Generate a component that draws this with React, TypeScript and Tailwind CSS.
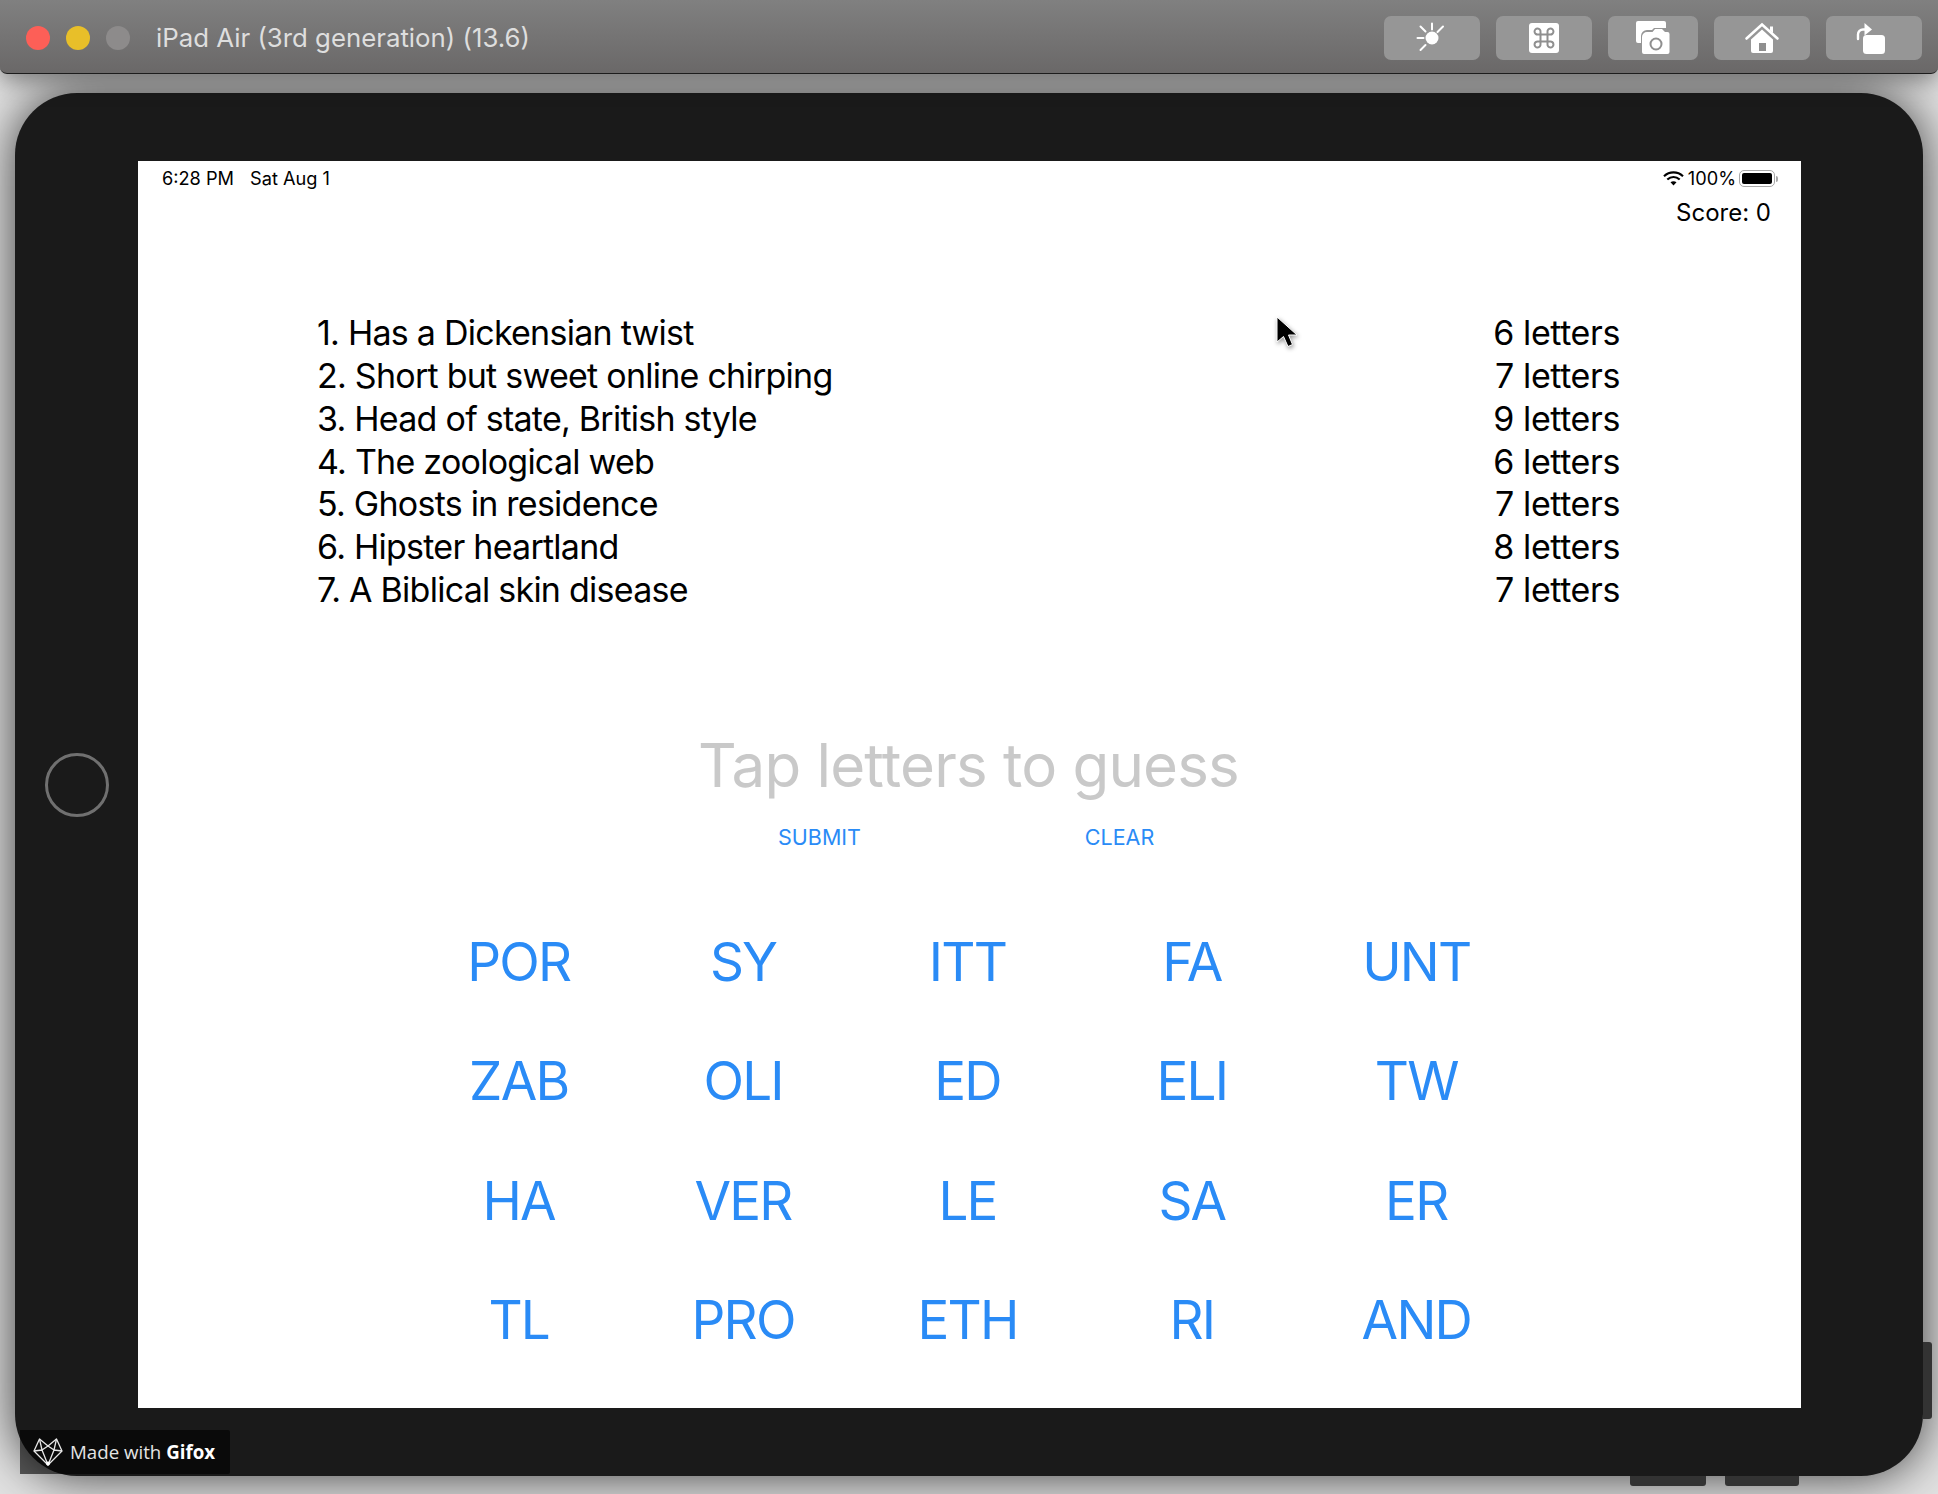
import React from 'react';

const clues = [
  { text: '1. Has a Dickensian twist', letters: '6 letters' },
  { text: '2. Short but sweet online chirping', letters: '7 letters' },
  { text: '3. Head of state, British style', letters: '9 letters' },
  { text: '4. The zoological web', letters: '6 letters' },
  { text: '5. Ghosts in residence', letters: '7 letters' },
  { text: '6. Hipster heartland', letters: '8 letters' },
  { text: '7. A Biblical skin disease', letters: '7 letters' },
];

const tiles = [
  'POR', 'SY', 'ITT', 'FA', 'UNT',
  'ZAB', 'OLI', 'ED', 'ELI', 'TW',
  'HA', 'VER', 'LE', 'SA', 'ER',
  'TL', 'PRO', 'ETH', 'RI', 'AND',
];

function SunIcon() {
  return (
    <svg width="32" height="32" viewBox="0 0 32 32" fill="none" stroke="white" strokeWidth="2" strokeLinecap="round">
      <circle cx="16" cy="16" r="6.5" fill="white" stroke="none" />
      <path d="M16 1.5V7.5M4.5 4.5L9.5 9.500M1.500 16H7.500M4.500 28L9.500 23M27 4.500L21.500 10" />
    </svg>
  );
}

function CommandIcon() {
  return (
    <div className="flex h-[30px] w-[30px] items-center justify-center rounded-[3px] bg-white">
      <svg width="24" height="24" viewBox="0 0 24 24" fill="none" stroke="#8f8f8f" strokeWidth="2">
        <path d="M8.5 8.5h7v7h-7zM8.5 8.5H6a3 3 0 1 1 2.5-2.5zM15.5 8.5V6A3 3 0 1 1 18 8.5zM15.5 15.5H18a3 3 0 1 1-2.5 2.5zM8.5 15.5V18A3 3 0 1 1 6 15.5z" />
      </svg>
    </div>
  );
}

function CameraIcon() {
  return (
    <svg width="38" height="36" viewBox="0 0 38 36">
      <path d="M4 1h26a2 2 0 0 1 2 2v5H20l-2 2h-5a6 6 0 0 0-6 6v7H4a2 2 0 0 1-2-2V3a2 2 0 0 1 2-2z" fill="white" />
      <path d="M10 34a2 2 0 0 1-2-2V17a5 5 0 0 1 5-5h5.500l2.500-3h7l3 3h2.500a2 2 0 0 1 2 2v18a2 2 0 0 1-2 2z" fill="white" />
      <circle cx="22" cy="24" r="5.500" fill="none" stroke="#8f8f8f" strokeWidth="2" />
    </svg>
  );
}

function HomeIcon() {
  return (
    <svg width="36" height="32" viewBox="0 0 36 32">
      <path d="M2.500 16.500L18 2.500L33.500 16.500" fill="none" stroke="white" strokeWidth="2.600" strokeLinecap="round" />
      <path d="M26 4.500h3v6.500l-3-2.500z" fill="white" />
      <path d="M18 7.500L7 17.500V29a2 2 0 0 0 2 2h18a2 2 0 0 0 2-2V17.500z" fill="white" />
      <rect x="15" y="21" width="7" height="8" fill="#8f8f8f" />
    </svg>
  );
}

function RotateIcon() {
  return (
    <svg width="36" height="34" viewBox="0 0 36 34">
      <rect x="7" y="14" width="22" height="19" rx="3.500" fill="white" />
      <path d="M2 18V13.500a5 5 0 0 1 5-5h3" fill="none" stroke="white" strokeWidth="2.400" strokeLinecap="round" />
      <path d="M8.500 2l7.500 6.500l-7.500 6z" fill="white" />
    </svg>
  );
}

function WifiIcon() {
  return (
    <svg width="21" height="15" viewBox="0 0 21 15" fill="none" stroke="black" strokeWidth="2.200">
      <path d="M1 5.200C6.500 0.200 14.500 0.200 20 5.200" />
      <path d="M4.300 8.500C8 5.200 13 5.200 16.700 8.500" />
      <path d="M10.500 14.500L7.500 11.300C9.200 9.800 11.800 9.800 13.500 11.300z" fill="black" stroke="none" />
    </svg>
  );
}

function BatteryIcon() {
  return (
    <div className="flex items-center">
      <div className="h-[17px] w-[36px] rounded-[5px] border border-[#a8a8a8] p-[2px]">
        <div className="h-full w-full rounded-[2px] bg-black" />
      </div>
      <div className="ml-[1px] h-[6px] w-[2px] rounded-r-full bg-[#a8a8a8]" />
    </div>
  );
}

function FoxLogo() {
  return (
    <svg width="30" height="28" viewBox="0 0 30 28" fill="none" stroke="#e8e8e8" strokeWidth="1.300" strokeLinejoin="round">
      <path d="M1 13L6.500 1L15 8L23.500 1L29 13L15 27z" />
      <path d="M6.500 1L9 12L15 8L21 12L23.500 1M1 13L9 12L15 27L21 12L29 13" />
      <circle cx="15" cy="25.500" r="2" fill="white" stroke="none" />
    </svg>
  );
}

export default function App() {
  return (
    <div className="relative h-[1494px] w-[1938px] overflow-hidden bg-[#e2e2e2] font-['Inter',sans-serif]">
      <header className="relative z-10 flex h-[74px] items-center rounded-b-[7px] border-b border-[#1c1c1c] bg-gradient-to-b from-[#808080] to-[#6a6868] pl-[26px] pr-[16px] pt-[3px] shadow-[0_6px_24px_rgba(0,0,0,0.45)]">
        <div className="flex gap-[16px]">
          <span className="h-[24px] w-[24px] rounded-full bg-[#fd5f57]" />
          <span className="h-[24px] w-[24px] rounded-full bg-[#e8bf29]" />
          <span className="h-[24px] w-[24px] rounded-full bg-[#8d8b8b]" />
        </div>
        <div className="ml-[26px] text-[25.800px] text-[#dedede]">iPad Air (3rd generation) (13.6)</div>
        <div className="ml-auto flex gap-[16px]">
          <button className="flex h-[44px] w-[96px] items-center justify-center rounded-[7px] bg-[#969696]"><SunIcon /></button>
          <button className="flex h-[44px] w-[96px] items-center justify-center rounded-[7px] bg-[#969696]"><CommandIcon /></button>
          <button className="flex h-[44px] w-[90px] items-center justify-center rounded-[7px] bg-[#969696]"><CameraIcon /></button>
          <button className="flex h-[44px] w-[96px] items-center justify-center rounded-[7px] bg-[#969696]"><HomeIcon /></button>
          <button className="flex h-[44px] w-[96px] items-center justify-center rounded-[7px] bg-[#969696]"><RotateIcon /></button>
        </div>
      </header>

      <main className="ml-[15px] mt-[19px] flex h-[1383px] w-[1908px] items-center rounded-[62px] bg-[#1a1a1a] shadow-[0_0_50px_rgba(0,0,0,0.75)]">
        <div className="flex w-[123px] justify-center">
          <div className="h-[64px] w-[64px] rounded-full border-[3.500px] border-[#707070]" />
        </div>
        <section className="h-[1247px] w-[1663px] bg-white text-black">
          <div className="flex h-[36px] items-center pl-[24px] pr-[23px] text-[18.200px]">
            <span>6:28 PM</span>
            <span className="ml-[16px]">Sat Aug 1</span>
            <div className="ml-auto flex items-center gap-[3px]">
              <WifiIcon />
              <span className="ml-[1px]">100%</span>
              <BatteryIcon />
            </div>
          </div>
          <div className="mt-[1px] pr-[30px] text-right text-[24px] leading-[30px]">Score: 0</div>

          <div className="mt-[84px] pl-[179px] pr-[181px]">
            {clues.map((clue) => (
              <div key={clue.text} className="flex justify-between text-[34px] leading-[42.850px]">
                <span className="tracking-[-0.750px]">{clue.text}</span>
                <span className="tracking-[-0.400px]">{clue.letters}</span>
              </div>
            ))}
          </div>

          <div className="mt-[117px] pr-[2px] text-center text-[60px] leading-[72px] tracking-[-0.800px] text-[#c9c9c9]">Tap letters to guess</div>

          <div className="mt-[21px] flex justify-center text-[21.500px] leading-[30px] text-[#2a8bf6]">
            <button className="w-[300px] text-center">SUBMIT</button>
            <button className="w-[300px] text-center">CLEAR</button>
          </div>

          <div className="ml-[268.500px] mt-[51px] grid w-[1122px] auto-rows-[119.500px] grid-cols-5">
            {tiles.map((tile) => (
              <button key={tile} className="flex items-center justify-center text-[53px] tracking-[-1.800px] text-[#2a8bf6]">{tile}</button>
            ))}
          </div>
        </section>
      </main>

      {/* hardware buttons sit over the device edge */}
      <div className="absolute left-[1923px] top-[1342px] h-[77px] w-[9px] rounded-r-[3px] bg-[#333333]" />
      <div className="absolute left-[1630px] top-[1476px] h-[10px] w-[76px] rounded-b-[3px] bg-[#333333]" />
      <div className="absolute left-[1725px] top-[1476px] h-[10px] w-[74px] rounded-b-[3px] bg-[#333333]" />

      {/* pointer */}
      <svg className="absolute left-[1275px] top-[315px] drop-shadow-[1px_2px_2px_rgba(0,0,0,0.4)]" width="26" height="36" viewBox="0 0 26 36">
        <path d="M2 2L2 27L8.500 21.500L13 31.500L17.500 29.500L13.500 20L22 20z" fill="black" stroke="white" strokeWidth="1" strokeLinejoin="round" />
      </svg>

      {/* watermark */}
      <div className="absolute left-[20px] top-[1430px] flex h-[44px] w-[210px] items-center rounded-r-[2px] bg-black/60 pl-[13px] font-['Open_Sans',sans-serif] text-[18.700px] text-[#e4e4e4]">
        <FoxLogo />
        <span className="ml-[7px]">Made with <b className="font-bold text-white">Gifox</b></span>
      </div>
    </div>
  );
}
